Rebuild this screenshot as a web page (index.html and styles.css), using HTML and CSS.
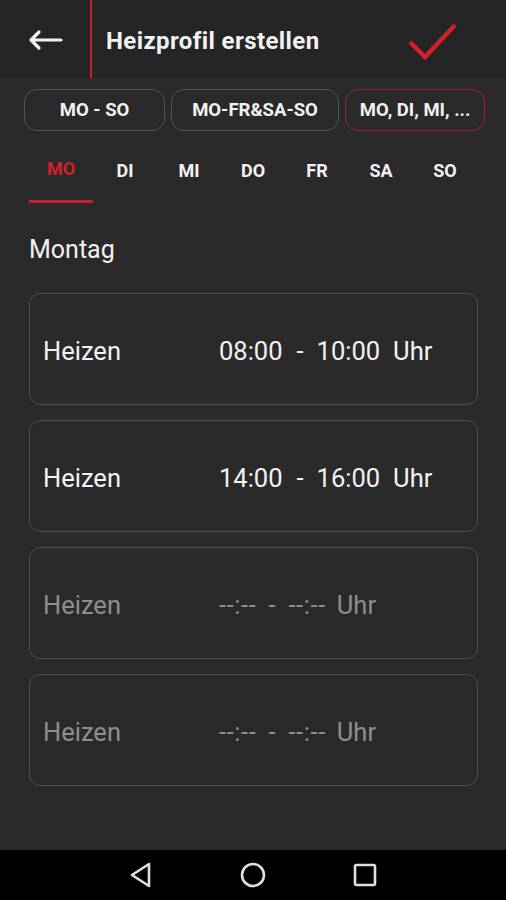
FILE: index.html
```html
<!DOCTYPE html>
<html lang="de">
<head>
    <meta charset="UTF-8">
    <meta name="viewport" content="width=device-width, initial-scale=1.0">
    <title>Heizprofil erstellen</title>
    <link rel="stylesheet" href="styles.css">
</head>
<body>
    <header class="toolbar">
        <div class="back">
            <svg width="36" height="24" viewBox="0 0 36 24">
                <path d="M34 12H4M12 4L4 12l8 8" fill="none" stroke="#f1f1f1" stroke-width="3.2" stroke-linecap="round" stroke-linejoin="round"/>
            </svg>
        </div>
        <h1>Heizprofil erstellen</h1>
        <div class="confirm">
            <svg width="52" height="40" viewBox="0 0 52 40">
                <path d="M4 22l15 15L49 5" fill="none" stroke="#d4202c" stroke-width="4.5"/>
            </svg>
        </div>
    </header>

    <div class="chips">
        <div class="chip">MO - SO</div>
        <div class="chip">MO-FR&amp;SA-SO</div>
        <div class="chip active">MO, DI, MI, ...</div>
    </div>

    <nav class="tabs">
        <div class="tab active">MO</div>
        <div class="tab">DI</div>
        <div class="tab">MI</div>
        <div class="tab">DO</div>
        <div class="tab">FR</div>
        <div class="tab">SA</div>
        <div class="tab">SO</div>
    </nav>

    <h2 class="day">Montag</h2>

    <div class="slots">
        <div class="slot">
            <span class="mode">Heizen</span>
            <span class="time">08:00</span><span class="dash">-</span><span class="time">10:00</span><span class="unit">Uhr</span>
        </div>
        <div class="slot">
            <span class="mode">Heizen</span>
            <span class="time">14:00</span><span class="dash">-</span><span class="time">16:00</span><span class="unit">Uhr</span>
        </div>
        <div class="slot empty">
            <span class="mode">Heizen</span>
            <span class="time">--:--</span><span class="dash">-</span><span class="time">--:--</span><span class="unit">Uhr</span>
        </div>
        <div class="slot empty">
            <span class="mode">Heizen</span>
            <span class="time">--:--</span><span class="dash">-</span><span class="time">--:--</span><span class="unit">Uhr</span>
        </div>
    </div>

    <footer class="navbar">
        <svg width="28" height="28" viewBox="0 0 28 28">
            <path d="M22 3L5 14l17 11z" fill="none" stroke="#e0e0e0" stroke-width="2.6" stroke-linejoin="round"/>
        </svg>
        <svg width="28" height="28" viewBox="0 0 28 28">
            <circle cx="14" cy="14" r="11" fill="none" stroke="#e0e0e0" stroke-width="2.6"/>
        </svg>
        <svg width="28" height="28" viewBox="0 0 28 28">
            <rect x="4" y="4" width="20" height="20" rx="1.5" fill="none" stroke="#e0e0e0" stroke-width="2.6"/>
        </svg>
    </footer>
</body>
</html>
```

FILE: styles.css
```css
/* Global */
body {
    margin: 0;
    width: 506px;
    height: 900px;
    background: #2a2a2a;
    color: #f2f2f2;
    font-family: Roboto, "Noto Sans", sans-serif;
    display: flex;
    flex-direction: column;
    overflow: hidden;
}

/* Toolbar */
.toolbar {
    height: 78px;
    background: #252525;
    display: flex;
    align-items: center;
    flex-shrink: 0;
}
.back {
    width: 92px;
    height: 100%;
    border-right: 2px solid #c41f2b;
    box-sizing: border-box;
    display: flex;
    align-items: center;
    padding-left: 27px;
    padding-top: 1px;
}
.toolbar h1 {
    margin: 4px 0 0 14px;
    font-size: 24px;
    letter-spacing: 0.4px;
    font-weight: 700;
    flex: 1;
}
.confirm {
    width: 100px;
    display: flex;
    padding-top: 2px;
}

/* Day groups */
.chips {
    display: flex;
    gap: 6px;
    padding: 11px 21px 0 24px;
}
.chip {
    height: 42px;
    box-sizing: border-box;
    border: 1.5px solid #555;
    border-radius: 13px;
    display: flex;
    align-items: center;
    justify-content: center;
    font-size: 18.5px;
    font-weight: 700;
    width: 141px;
    white-space: nowrap;
}
.chip:nth-child(2) {
    width: 168px;
}
.chip.active {
    width: 140px;
    border-color: #a5202a;
}

/* Tabs */
.tabs {
    display: flex;
    padding: 0 29px;
    margin-top: 14px;
}
.tab {
    width: 64px;
    height: 58px;
    box-sizing: border-box;
    display: flex;
    align-items: center;
    justify-content: center;
    font-size: 18px;
    font-weight: 700;
    padding-bottom: 8px;
}
.tab.active {
    color: #d4202c;
    border-bottom: 3px solid #c41f2b;
}

.day {
    margin: 31px 0 0 29px;
    font-size: 25px;
    font-weight: 400;
    line-height: 32px;
}

/* Time slots */
.slots {
    display: flex;
    flex-direction: column;
    gap: 15px;
    padding: 27px 28px 0 29px;
}
.slot {
    height: 112px;
    box-sizing: border-box;
    border: 1.5px solid #4e4e4e;
    border-radius: 11px;
    display: flex;
    align-items: center;
    padding-left: 13px;
    padding-top: 3px;
    font-size: 25.5px;
}
.mode {
    width: 176px;
}
.dash {
    margin: 0 13px 0 14px;
}
.unit {
    margin-left: 13px;
}
.slot.empty {
    color: #8e8e8e;
}
.slot.empty .time {
    letter-spacing: 0.6px;
}
.slot.empty .dash {
    margin: 0 13px 0 12px;
}
.slot.empty .unit {
    margin-left: 11px;
}

/* Android nav */
.navbar {
    margin-top: auto;
    height: 50px;
    background: #000;
    display: flex;
    align-items: center;
    justify-content: center;
    gap: 84px;
}
```
